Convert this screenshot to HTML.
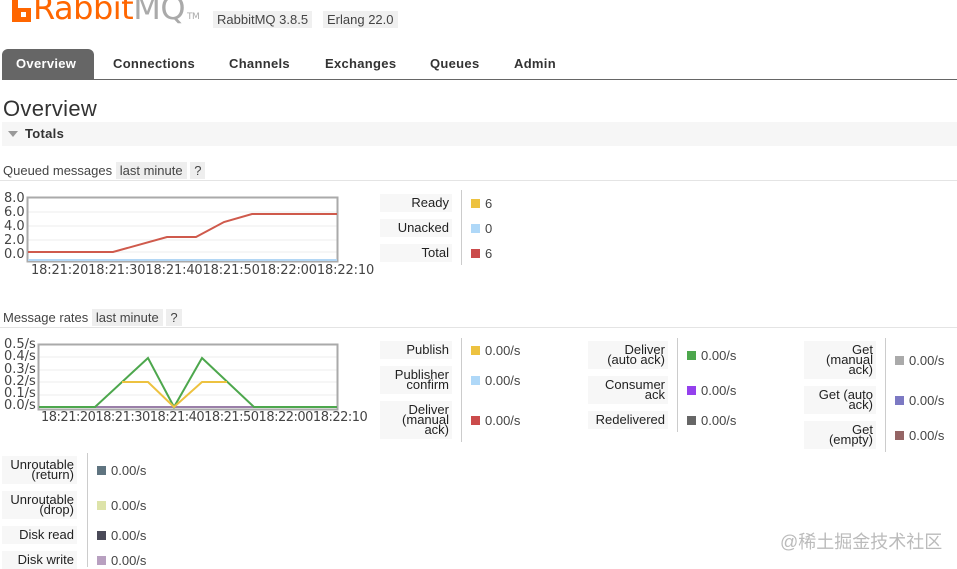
<!DOCTYPE html>
<html><head><meta charset="utf-8"><style>
body{margin:0;width:957px;height:567px;overflow:hidden;background:#fff;font-family:"Liberation Sans","DejaVu Sans",sans-serif;color:#333;position:relative}
.a{position:absolute}
.lb{position:absolute;background:#f7f7f7;text-align:right;font-size:13px;line-height:10px;color:#222;box-sizing:border-box;padding:0 3px;display:flex;flex-direction:column;justify-content:center;align-items:flex-end}
.lb.one{line-height:18px}
.sq{position:absolute;width:9px;height:9px}
.v{position:absolute;font-size:13px;color:#444}
.dv{position:absolute;width:1px;background:#ccc}
.tab{position:absolute;top:50px;height:28px;line-height:28px;font-weight:bold;font-size:13px;color:#333;letter-spacing:0.3px}
.tk{position:absolute;font-size:13px;color:#444;font-family:"DejaVu Sans",sans-serif}
</style></head><body>
<div class="a" style="left:12px;top:0;width:6px;height:10px;background:#f60"></div>
<div class="a" style="left:12px;top:8px;width:19px;height:14px;background:#f60"></div>
<div class="a" style="left:21px;top:12px;width:5px;height:5px;background:#fff"></div>
<div class="a" style="left:33px;top:-9px;font-size:32px;color:#f60;line-height:34px;font-family:'DejaVu Sans',sans-serif;letter-spacing:-0.5px">Rabbit<span style="color:#aaa">MQ</span><span style="font-size:9px;color:#aaa;margin-left:2px">TM</span></div>
<div class="a" style="left:213px;top:11px;background:#f0f0f0;padding:1px 4px;font-size:13px;color:#444">RabbitMQ 3.8.5</div>
<div class="a" style="left:323px;top:11px;background:#f0f0f0;padding:1px 4px;font-size:13px;color:#444">Erlang 22.0</div>
<div class="a" style="left:2px;top:49px;width:92px;height:30px;background:#666;border-radius:6px 6px 0 0"></div>
<div class="tab" style="left:16px;color:#fff;top:50px">Overview</div>
<div class="tab" style="left:113px">Connections</div>
<div class="tab" style="left:229px">Channels</div>
<div class="tab" style="left:325px">Exchanges</div>
<div class="tab" style="left:430px">Queues</div>
<div class="tab" style="left:514px">Admin</div>
<div class="a" style="left:2px;top:79px;width:955px;height:1px;background:#666"></div>
<div class="a" style="left:3px;top:96px;font-size:22px;color:#333;letter-spacing:0.3px">Overview</div>
<div class="a" style="left:2px;top:122px;width:955px;height:24px;background:#f6f6f6"></div>
<div class="a" style="left:8px;top:131px;width:0;height:0;border-left:5px solid transparent;border-right:5px solid transparent;border-top:6px solid #999"></div>
<div class="a" style="left:25px;top:126px;font-size:13px;font-weight:bold;color:#333;letter-spacing:0.3px">Totals</div>

<div class="a" style="left:3px;top:163px;font-size:13px;color:#444">Queued messages <span style="background:#eee;padding:1px 4px">last minute</span> <span style="background:#eee;padding:1px 4px">?</span></div>
<div class="a" style="left:0;top:180px;width:957px;height:1px;background:#e4e4e4"></div>

<svg class="a" style="left:0;top:190px" width="380" height="95">
<g stroke="#eee"><line x1="28" y1="22" x2="337" y2="22"/><line x1="28" y1="36" x2="337" y2="36"/><line x1="28" y1="50" x2="337" y2="50"/><line x1="28" y1="62" x2="337" y2="62"/></g>
<rect x="27.5" y="7.5" width="310" height="64" fill="none" stroke="#aaa" stroke-width="2"/>
<line x1="28" y1="70" x2="337" y2="70" stroke="#b3d7f5" stroke-width="2"/>
<polyline points="28,62 113,62 167,47 196,47 224,32 252,24 337,24" fill="none" stroke="#cf5a4c" stroke-width="2"/>
</svg>
<div class="tk" style="left:4px;top:192px;line-height:14px">8.0<br>6.0<br>4.0<br>2.0<br>0.0</div>
<div class="tk" style="left:31px;top:263px;letter-spacing:-0.15px">18:21:2018:21:3018:21:4018:21:5018:22:0018:22:10</div>

<div class="lb one" style="left:380px;top:194px;width:72px;height:18px">Ready</div>
<div class="lb one" style="left:380px;top:219px;width:72px;height:18px">Unacked</div>
<div class="lb one" style="left:380px;top:244px;width:72px;height:18px">Total</div>
<div class="dv" style="left:461px;top:190px;height:75px"></div>
<div class="sq" style="left:471px;top:199px;background:#edc240"></div><div class="v" style="left:485px;top:196px">6</div>
<div class="sq" style="left:471px;top:224px;background:#afd8f8"></div><div class="v" style="left:485px;top:221px">0</div>
<div class="sq" style="left:471px;top:249px;background:#cb4b4b"></div><div class="v" style="left:485px;top:246px">6</div>

<div class="a" style="left:3px;top:310px;font-size:13px;color:#444">Message rates <span style="background:#eee;padding:1px 4px">last minute</span> <span style="background:#eee;padding:1px 4px">?</span></div>
<div class="a" style="left:0;top:327px;width:957px;height:1px;background:#e4e4e4"></div>

<svg class="a" style="left:0;top:335px" width="380" height="95">
<g stroke="#eee"><line x1="39" y1="22" x2="337" y2="22"/><line x1="39" y1="35" x2="337" y2="35"/><line x1="39" y1="47" x2="337" y2="47"/><line x1="39" y1="60" x2="337" y2="60"/></g>
<rect x="38.5" y="9.5" width="299" height="65" fill="none" stroke="#aaa" stroke-width="2"/>
<line x1="39" y1="72" x2="337" y2="72" stroke="#9a7fa8" stroke-width="2"/>
<polyline points="39,72 95,72 148,23 174,72 202,23 254,72 337,72" fill="none" stroke="#4da74d" stroke-width="2"/>
<polyline points="122,47 148,47 174,72 202,47 227,47" fill="none" stroke="#edc240" stroke-width="2"/>
</svg>
<div class="tk" style="left:4px;top:339px;line-height:12.3px">0.5/s<br>0.4/s<br>0.3/s<br>0.2/s<br>0.1/s<br>0.0/s</div>
<div class="tk" style="left:41px;top:410px;letter-spacing:-0.5px">18:21:2018:21:3018:21:4018:21:5018:22:0018:22:10</div>

<div class="lb one" style="left:380px;top:341px;width:72px;height:18px">Publish</div>
<div class="lb" style="left:380px;top:366px;width:72px;height:28px">Publisher<br>confirm</div>
<div class="lb" style="left:380px;top:401px;width:72px;height:38px">Deliver<br>(manual<br>ack)</div>
<div class="dv" style="left:461px;top:338px;height:104px"></div>
<div class="sq" style="left:471px;top:346px;background:#edc240"></div><div class="v" style="left:485px;top:343px">0.00/s</div>
<div class="sq" style="left:471px;top:376px;background:#afd8f8"></div><div class="v" style="left:485px;top:373px">0.00/s</div>
<div class="sq" style="left:471px;top:416px;background:#cb4b4b"></div><div class="v" style="left:485px;top:413px">0.00/s</div>

<div class="lb" style="left:588px;top:341px;width:80px;height:28px">Deliver<br>(auto ack)</div>
<div class="lb" style="left:588px;top:376px;width:80px;height:28px">Consumer<br>ack</div>
<div class="lb one" style="left:588px;top:411px;width:80px;height:18px">Redelivered</div>
<div class="dv" style="left:677px;top:338px;height:94px"></div>
<div class="sq" style="left:687px;top:351px;background:#4da74d"></div><div class="v" style="left:701px;top:348px">0.00/s</div>
<div class="sq" style="left:687px;top:386px;background:#9440ed"></div><div class="v" style="left:701px;top:383px">0.00/s</div>
<div class="sq" style="left:687px;top:416px;background:#666"></div><div class="v" style="left:701px;top:413px">0.00/s</div>

<div class="lb" style="left:804px;top:341px;width:72px;height:38px">Get<br>(manual<br>ack)</div>
<div class="lb" style="left:804px;top:386px;width:72px;height:28px">Get (auto<br>ack)</div>
<div class="lb" style="left:804px;top:421px;width:72px;height:28px">Get<br>(empty)</div>
<div class="dv" style="left:885px;top:338px;height:114px"></div>
<div class="sq" style="left:895px;top:356px;background:#aaa"></div><div class="v" style="left:909px;top:353px">0.00/s</div>
<div class="sq" style="left:895px;top:396px;background:#7c79c3"></div><div class="v" style="left:909px;top:393px">0.00/s</div>
<div class="sq" style="left:895px;top:431px;background:#956565"></div><div class="v" style="left:909px;top:428px">0.00/s</div>

<div class="lb" style="left:2px;top:456px;width:75px;height:28px">Unroutable<br>(return)</div>
<div class="lb" style="left:2px;top:491px;width:75px;height:28px">Unroutable<br>(drop)</div>
<div class="lb one" style="left:2px;top:526px;width:75px;height:18px">Disk read</div>
<div class="lb one" style="left:2px;top:551px;width:75px;height:18px">Disk write</div>
<div class="dv" style="left:87px;top:453px;height:114px"></div>
<div class="sq" style="left:97px;top:466px;background:#5f7480"></div><div class="v" style="left:111px;top:463px">0.00/s</div>
<div class="sq" style="left:97px;top:501px;background:#dde3a9"></div><div class="v" style="left:111px;top:498px">0.00/s</div>
<div class="sq" style="left:97px;top:531px;background:#4a4a58"></div><div class="v" style="left:111px;top:528px">0.00/s</div>
<div class="sq" style="left:97px;top:556px;background:#b8a0c0"></div><div class="v" style="left:111px;top:553px">0.00/s</div>

<div class="a" style="left:780px;top:528px;font-size:18px;color:#bbb;font-family:'Liberation Sans','Noto Sans CJK SC',sans-serif">@稀土掘金技术社区</div>
</body></html>
